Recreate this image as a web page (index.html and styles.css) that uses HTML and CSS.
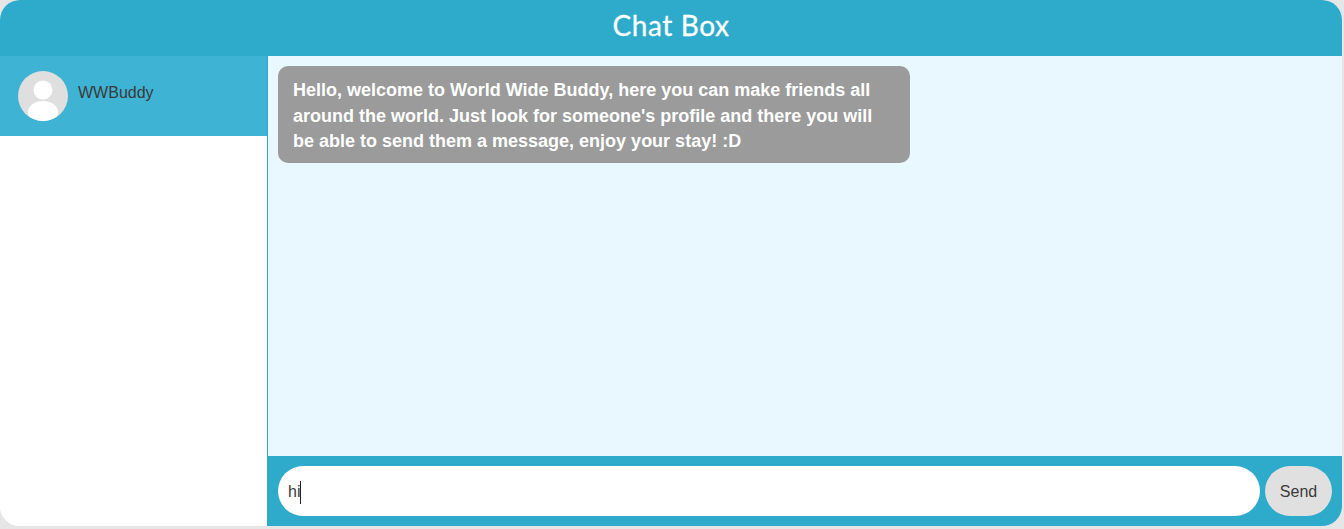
FILE: index.html
```html
<!DOCTYPE html>
<html lang="en">
<head>
    <meta charset="UTF-8">
    <meta name="viewport" content="width=device-width, initial-scale=1.0">
    <title>Chat Box</title>
    <link rel="stylesheet" href="styles.css">
</head>
<body>
    <div class="chat-box">
        <div class="chat-header">Chat Box</div>
        <div class="chat-body">
            <!-- Contacts -->
            <div class="contacts">
                <div class="contact">
                    <svg class="avatar" viewBox="0 0 50 50">
                        <clipPath id="avatar-clip"><circle cx="25" cy="25" r="25"/></clipPath>
                        <circle cx="25" cy="25" r="25" fill="#dfdfdf"/>
                        <circle cx="25" cy="19" r="9.5" fill="#fff"/>
                        <ellipse cx="25" cy="41" rx="15" ry="11" fill="#fff" clip-path="url(#avatar-clip)"/>
                    </svg>
                    <span class="contact-name">WWBuddy</span>
                </div>
            </div>
            <!-- Messages -->
            <div class="chat-main">
                <div class="messages">
                    <div class="message">Hello, welcome to World Wide Buddy, here you can make friends all around the world. Just look for someone's profile and there you will be able to send them a message, enjoy your stay! :D</div>
                </div>
                <div class="send-bar">
                    <div class="msg-input">hi<span class="caret"></span></div>
                    <div class="send-btn">Send</div>
                </div>
            </div>
        </div>
    </div>
</body>
</html>
```

FILE: styles.css
```css
/* General Styling */
html, body {
    height: 100%;
}

body {
    margin: 0;
    background: #e6e6e6;
    overflow: hidden;
    font-family: "Liberation Sans", Arial, sans-serif;
    color: #3a3a3a;
}

.chat-box {
    width: 1342px;
    height: 526px;
    display: flex;
    flex-direction: column;
    border-radius: 20px;
    overflow: hidden;
    background: #fff;
}

.chat-header {
    height: 56px;
    flex-shrink: 0;
    background: #2eabca;
    color: #fff;
    font-family: "Lato", sans-serif;
    font-size: 28px;
    letter-spacing: 0.6px;
    -webkit-text-stroke: 0.3px #fff;
    line-height: 50px;
    text-align: center;
}

.chat-body {
    flex: 1;
    display: flex;
    min-height: 0;
}

.contacts {
    width: 267px;
    flex-shrink: 0;
    background: #fff;
}

.contact {
    height: 80px;
    display: flex;
    align-items: center;
    gap: 10px;
    padding-left: 18px;
    background: #3eb3d3;
}

.avatar {
    width: 50px;
    height: 50px;
}

.contact-name {
    font-size: 16px;
    margin-top: -6px;
}

.chat-main {
    flex: 1;
    display: flex;
    flex-direction: column;
    border-left: 1px solid #2eabca;
}

.messages {
    flex: 1;
    padding: 10px;
    background: #e9f8fe;
}

.message {
    width: 602px;
    padding: 12px 15px 8px;
    border-radius: 10px;
    background: #9b9b9b;
    color: #fff;
    font-size: 18px;
    font-weight: bold;
    line-height: 1.42857;
}

.send-bar {
    height: 70px;
    display: flex;
    align-items: center;
    gap: 5px;
    padding: 0 10px;
    background: #2eabca;
}

.msg-input {
    flex: 1;
    height: 50px;
    padding: 2px 0 0 10px;
    box-sizing: border-box;
    border-radius: 25px;
    background: #fff;
    font-size: 16px;
    display: flex;
    align-items: center;
}

.caret {
    width: 1px;
    height: 23px;
    background: #222;
}

.send-btn {
    width: 67px;
    height: 50px;
    border-radius: 25px;
    background: #e0e0e0;
    font-size: 16px;
    line-height: 52px;
    text-align: center;
}
```
